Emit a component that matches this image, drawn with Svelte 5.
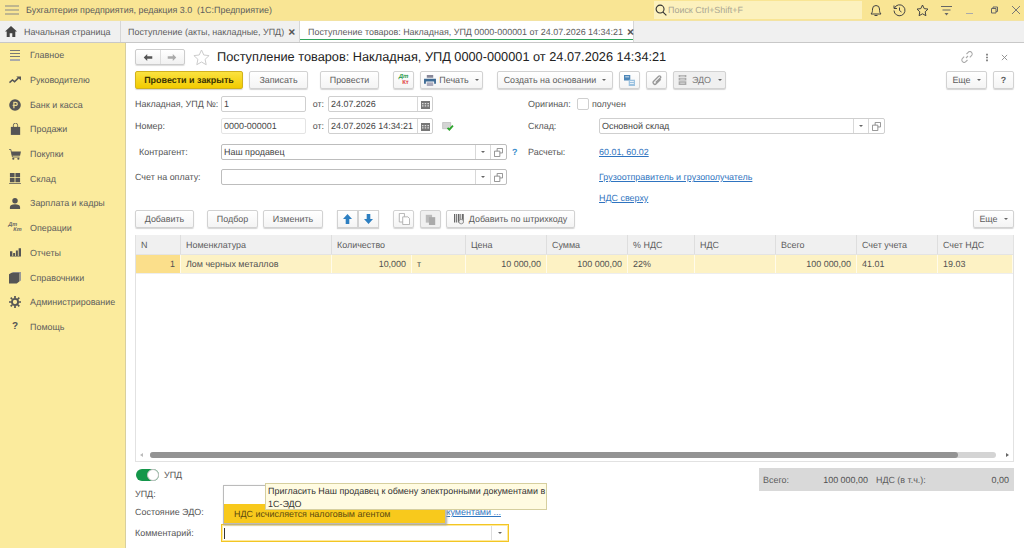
<script>
	const menu = [
		{ name: 'Главное', icon: 'main' },
		{ name: 'Руководителю', icon: 'trend' },
		{ name: 'Банк и касса', icon: 'bank' },
		{ name: 'Продажи', icon: 'bag' },
		{ name: 'Покупки', icon: 'cart' },
		{ name: 'Склад', icon: 'grid' },
		{ name: 'Зарплата и кадры', icon: 'person' },
		{ name: 'Операции', icon: 'dtkt' },
		{ name: 'Отчеты', icon: 'bars' },
		{ name: 'Справочники', icon: 'books' },
		{ name: 'Администрирование', icon: 'gear' },
		{ name: 'Помощь', icon: 'help' }
	];

	const head = [
		['N', 'c-n'], ['Номенклатура', 'c-name'], ['Количество', 'c-qty'], ['Цена', 'c-price'],
		['Сумма', 'c-sum'], ['% НДС', 'c-pct'], ['НДС', 'c-vat'], ['Всего', 'c-total'],
		['Счет учета', 'c-acc'], ['Счет НДС', 'c-vacc']
	];

	const row = [
		['1', 'num c-line'], ['Лом черных металлов', ''], ['10,000', 'num'], ['т', ''], ['10 000,00', 'num'],
		['100 000,00', 'num'], ['22%', ''], ['', ''], ['100 000,00', 'num'], ['41.01', ''], ['19.03', '']
	];
</script>

{#snippet calendar()}
	<span class="side-btn">
		<svg width="9" height="9" viewBox="0 0 9 9"><path fill="#777" d="M0 1h9v8H0z"/><path fill="#ddd" d="M1 3h1.500v1.300H1zM3.700 3h1.500v1.300H3.700zM6.400 3H8v1.300H6.400zM1 5.300h1.500v1.300H1zM3.700 5.300h1.500v1.300H3.700zM6.400 5.300H8v1.300H6.400z"/></svg>
	</span>
{/snippet}

{#snippet combo()}
	<span class="side-btn"><i class="caret"></i></span>
	<span class="side-btn wide">
		<svg width="9" height="9" viewBox="0 0 10 10" fill="none" stroke="#888"><path d="M3.500 3.500v-3h6v5h-3"/><path d="M.5 3.500h6v6h-6z"/></svg>
	</span>
{/snippet}

<div class="app">
	<header class="topbar">
		<svg class="burger" width="14" height="10" viewBox="0 0 14 10"><path stroke="#888" stroke-width="1.100" d="M0 1h14M0 5h14M0 9h14"/></svg>
		<span class="app-title">Бухгалтерия предприятия, редакция 3.0&nbsp; (1С:Предприятие)</span>
		<div class="search">
			<svg width="12" height="12" viewBox="0 0 13 13" fill="none" stroke="#333" stroke-width="1.200"><circle cx="5.500" cy="5.500" r="4.300"/><path d="M8.700 8.700l3.600 3.600"/></svg>
			<span>Поиск Ctrl+Shift+F</span>
		</div>
		<div class="sys">
			<svg width="12" height="13" viewBox="0 0 12 13" fill="none" stroke="#444"><path d="M1 10c1.500-1.500 1.500-3 1.500-5a3.500 3.500 0 0 1 7 0c0 2 0 3.500 1.500 5z"/><path d="M4.500 11.500h3"/></svg>
			<svg width="13" height="13" viewBox="0 0 13 13" fill="none" stroke="#444"><path d="M1.500 4a5.500 5.500 0 1 1-.5 2.500"/><path d="M1 1.500V4.500h3"/><path d="M6.500 3.500v3l2 1.500"/></svg>
			<svg width="13" height="13" viewBox="0 0 13 13" fill="none" stroke="#444"><path d="M6.500 1l1.700 3.600 3.800.5-2.800 2.700.7 3.900-3.400-1.900-3.400 1.900.7-3.900L1 5.100l3.800-.5z"/></svg>
			<svg width="13" height="11" viewBox="0 0 13 11"><path stroke="#666" d="M1 1.500h11M2.500 5h8"/><path fill="#666" d="M4.500 8h4l-2 2.500z"/></svg>
			<svg width="13" height="11" viewBox="0 0 13 11"><path stroke="#aaa" d="M3 8.500h7"/></svg>
			<svg width="13" height="11" viewBox="0 0 13 11" fill="none" stroke="#666"><path d="M4.500 3.500h4.500v4.500H4.500z"/><path d="M6 3.500V2h4.500v4.500H9"/></svg>
			<svg width="13" height="11" viewBox="0 0 13 11"><path stroke="#777" d="M2 1l8 8M10 1l-8 8"/></svg>
		</div>
	</header>

	<nav class="tabs">
		<div class="tab home">
			<svg width="12" height="11" viewBox="0 0 12 11"><path fill="#444" d="M6 0l6 5.500h-1.700V11H7.300V7.300H4.700V11H1.700V5.500H0z"/></svg>
			<span>Начальная страница</span>
		</div>
		<div class="tab list">
			<span>Поступление (акты, накладные, УПД)</span><b class="x">×</b>
		</div>
		<div class="tab active">
			<span>Поступление товаров: Накладная, УПД 0000-000001 от 24.07.2026 14:34:21</span><b class="x">×</b>
		</div>
	</nav>

	<div class="body">
		<aside class="sidebar">
			{#each menu as item}
				<div class="menu-item">
					<span class="menu-icon">
						{#if item.icon === 'main'}
							<svg width="14" height="13" viewBox="0 0 14 13"><path stroke="#777" d="M2 1.500h10M2 4.500h10M2 7.500h10"/><path stroke="#aaa" stroke-width="2" d="M2 11h10"/></svg>
						{:else if item.icon === 'trend'}
							<svg width="12" height="8" viewBox="0 0 14 9" fill="none"><path stroke="#555" stroke-width="1.800" d="M.5 7.500l3.500-3 2.500 2L11 2"/><path fill="#555" d="M8.500.500H14V5z"/></svg>
						{:else if item.icon === 'bank'}
							<svg width="12" height="12" viewBox="0 0 13 13"><circle cx="6.500" cy="6.500" r="6.300" fill="#555"/><path fill="none" stroke="#e9d78c" stroke-width="1.400" d="M5.300 10V3.700h2a1.600 1.600 0 0 1 0 3.300H4"/></svg>
						{:else if item.icon === 'bag'}
							<svg width="11" height="12" viewBox="0 0 13 14"><path fill="#555" d="M1 4.500h11V14H1z"/><path fill="none" stroke="#555" d="M4 6V2.500a2.500 2.500 0 0 1 5 0V6"/></svg>
						{:else if item.icon === 'cart'}
							<svg width="12" height="11" viewBox="0 0 14 13"><path fill="#555" d="M2.500 3H14l-1 5H3.500z"/><path stroke="#555" fill="none" d="M0 .5h2l2 9h8.500"/><circle cx="5" cy="11.500" r="1.300" fill="#555"/><circle cx="11" cy="11.500" r="1.300" fill="#555"/></svg>
						{:else if item.icon === 'grid'}
							<svg width="12" height="11" viewBox="0 0 14 13"><path fill="#555" d="M1 0h5.500v5H1zM7.500 0H13v5H7.500zM1 6h5.500v5H1zM7.500 6H13v5H7.500zM0 12h14v1H0z"/></svg>
						{:else if item.icon === 'person'}
							<svg width="12" height="11" viewBox="0 0 14 13"><circle cx="7" cy="3.300" r="3.200" fill="#555"/><path fill="#555" d="M1 13v-2.500C1 8.500 3.500 7.300 7 7.300s6 1.200 6 3.200V13z"/></svg>
						{:else if item.icon === 'dtkt'}
							<span class="dtkt"><em>Дт</em><em>Кт</em></span>
						{:else if item.icon === 'bars'}
							<svg width="11" height="9" viewBox="0 0 14 11"><path fill="#555" d="M0 4h3v6H0zM4 6h2.500v4H4zM7.500 3H10v7H7.500zM11 0h3v10h-3zM0 10.300h14v.7H0z"/></svg>
						{:else if item.icon === 'books'}
							<svg width="12" height="12" viewBox="0 0 14 14"><path fill="#999" d="M4 0h10v10l-2 1V2H4z"/><path fill="#555" d="M0 2.500L3 1h9v10l-3 2.500H0z"/></svg>
						{:else if item.icon === 'gear'}
							<svg width="12" height="12" viewBox="0 0 14 14"><circle cx="7" cy="7" r="3.600" fill="none" stroke="#555" stroke-width="2.200"/><path stroke="#555" stroke-width="2" d="M7 0v2.500M7 11.500V14M0 7h2.500M11.500 7H14M2 2l1.800 1.800M10.200 10.200L12 12M12 2l-1.800 1.800M3.800 10.200L2 12"/></svg>
						{:else}
							<b class="qmark">?</b>
						{/if}
					</span>
					<span>{item.name}</span>
				</div>
			{/each}
		</aside>

		<main class="form-page">
			<div class="title-row">
				<div class="nav-group">
					<button type="button"><svg width="10" height="7" viewBox="0 0 11 9"><path fill="#555" d="M0 4.500L4.500 0v3H11v3H4.500v3z"/></svg></button>
					<button type="button"><svg width="10" height="7" viewBox="0 0 11 9"><path fill="#aaa" d="M11 4.500L6.500 0v3H0v3h6.500v3z"/></svg></button>
				</div>
				<svg class="star" width="17" height="17" viewBox="0 0 17 17" fill="#fff" stroke="#ccc"><path d="M8.500 1l2.300 5 5.300.6-4 3.700 1.100 5.400-4.700-2.700-4.700 2.700 1.100-5.400-4-3.700 5.300-.6z"/></svg>
				<h1>Поступление товаров: Накладная, УПД 0000-000001 от 24.07.2026 14:34:21</h1>
				<div class="title-tools">
					<svg width="12" height="12" viewBox="0 0 12 12" fill="none" stroke="#aaa" stroke-width="1.100"><path d="M5 7l2-2"/><path d="M5.500 3l1.700-1.700a2.200 2.200 0 0 1 3.300 3.300L8.800 6.300"/><path d="M6.500 9l-1.700 1.700a2.200 2.200 0 0 1-3.300-3.300L3.200 5.700"/></svg>
					<svg width="2" height="9" viewBox="0 0 3 11"><path fill="#888" d="M0 0h3v2.500H0zM0 4.200h3v2.500H0zM0 8.500h3V11H0z"/></svg>
					<svg width="7" height="7" viewBox="0 0 8 8"><path stroke="#888" d="M1 1l6 6M7 1L1 7"/></svg>
				</div>
			</div>

			<div class="toolbar main-bar">
				<button class="btn primary" type="button">Провести и закрыть</button>
				<button class="btn save" type="button">Записать</button>
				<button class="btn post" type="button">Провести</button>
				<button class="btn icon dk" type="button"><span class="dk-mark"><em>Дт</em><em>Кт</em></span></button>
				<button class="btn print" type="button">
					<svg width="12" height="11" viewBox="0 0 13 12"><path fill="#3d6a94" d="M0 4h13v5.500h-2V7H2v2.500H0z"/><path fill="#889" d="M3 0h7v3H3z"/><path fill="#aab" d="M3 8h7v4H3z"/></svg>
					Печать<i class="caret"></i>
				</button>
				<button class="btn based" type="button">Создать на основании<i class="caret"></i></button>
				<button class="btn icon" type="button">
					<svg width="11" height="11" viewBox="0 0 14 14"><path fill="#4c86b8" d="M0 0h8v7H0z"/><path fill="#9cc2e0" d="M6 6h8v8H6z"/><path fill="#fff" d="M1.500 2h5v1h-5zM7.500 8h5v1h-5zM7.500 10.500h5v1h-5z"/></svg>
				</button>
				<button class="btn icon" type="button">
					<svg width="10" height="11" viewBox="0 0 12 13" fill="none" stroke="#999" stroke-width="1.600"><path d="M10.500 5L5 10.500a2 2 0 0 1-3-3l6-6a1.300 1.300 0 0 1 2 2l-5.500 5.500"/></svg>
				</button>
				<button class="btn edo muted" type="button">
					<svg width="11" height="10" viewBox="0 0 14 13"><path fill="#aaa" d="M2 0h10v3H2zM2 4h10v3H2zM2 8h10v5H2z"/><path fill="#eee" d="M4 1h6v1H4zM4 5h6v1H4zM4 10h6v1H4z"/></svg>
					ЭДО<i class="caret"></i>
				</button>
				<span class="spacer"></span>
				<button class="btn more" type="button">Еще<i class="caret"></i></button>
				<button class="btn icon help" type="button">?</button>
			</div>

			<div class="form">
				<div class="cell">
					<label class="lbl" for="doc-no">Накладная, УПД №:</label>
					<span class="input short" id="doc-no">1</span>
					<span class="from">от:</span>
					<span class="input date"><span class="val">24.07.2026</span>{@render calendar()}</span>
				</div>
				<div class="cell">
					<span class="lbl side short-lbl">Оригинал:</span>
					<span class="check"></span>
					<span class="lbl-text">получен</span>
				</div>

				<div class="cell">
					<span class="lbl">Номер:</span>
					<span class="input short soft">0000-000001</span>
					<span class="from">от:</span>
					<span class="input date"><span class="val">24.07.2026 14:34:21</span>{@render calendar()}</span>
					<svg class="posted" width="12" height="9" viewBox="0 0 13 10"><path fill="#d4d4d4" stroke="#aaa" stroke-width=".6" d="M.5.500h9v7h-9z"/><path fill="none" stroke="#2aa52a" stroke-width="2" d="M6 6.500l2 2 4-4.500"/></svg>
				</div>
				<div class="cell">
					<span class="lbl side">Склад:</span>
					<span class="input wide-input"><span class="val">Основной склад</span>{@render combo()}</span>
				</div>

				<div class="cell">
					<span class="lbl indent">Контрагент:</span>
					<span class="input wide-input dark"><span class="val">Наш продавец</span>{@render combo()}</span>
					<span class="hint">?</span>
				</div>
				<div class="cell">
					<span class="lbl side">Расчеты:</span>
					<a class="link" href="#accounts">60.01, 60.02</a>
				</div>

				<div class="cell">
					<span class="lbl">Счет на оплату:</span>
					<span class="input wide-input dark"><span class="val"></span>{@render combo()}</span>
				</div>
				<div class="cell">
					<span class="lbl side"></span>
					<a class="link" href="#shipper">Грузоотправитель и грузополучатель</a>
				</div>

				<div class="cell"></div>
				<div class="cell">
					<span class="lbl side"></span>
					<a class="link" href="#vat">НДС сверху</a>
				</div>
			</div>

			<div class="toolbar table-bar">
				<button class="btn add" type="button">Добавить</button>
				<button class="btn pick" type="button">Подбор</button>
				<button class="btn edit" type="button">Изменить</button>
				<div class="updown">
					<button class="btn icon" type="button"><svg width="9" height="10" viewBox="0 0 10 11"><path fill="#2d7fc1" d="M5 0l5 5.500H7V11H3V5.500H0z"/></svg></button>
					<button class="btn icon" type="button"><svg width="9" height="10" viewBox="0 0 10 11"><path fill="#2d7fc1" d="M5 11L0 5.500h3V0h4v5.500h3z"/></svg></button>
				</div>
				<button class="btn icon copy" type="button">
					<svg width="12" height="12" viewBox="0 0 14 14" fill="#fff" stroke="#aaa"><path d="M1.500.500h6v10h-6z"/><path d="M5.500 4.500h6l2 2v7h-8z"/></svg>
				</button>
				<button class="btn icon muted" type="button">
					<svg width="11" height="11" viewBox="0 0 14 14"><path fill="#bbb" d="M1 1h8v10H1z"/><path fill="#aaa" d="M5 4h8v10H5z"/></svg>
				</button>
				<button class="btn barcode" type="button">
					<svg width="11" height="11" viewBox="0 0 13 13"><path fill="#666" d="M0 0h1.500v10H0zM2.500 0h1v10h-1zM4.500 0h2v10h-2zM7.500 0h1v10h-1zM9.500 0h2v10h-2z"/><circle cx="8.500" cy="9" r="2.700" fill="#eee" stroke="#888"/></svg>
					Добавить по штрихкоду
				</button>
				<span class="spacer"></span>
				<button class="btn more" type="button">Еще<i class="caret"></i></button>
			</div>

			<div class="table">
				<div class="thead">
					{#each head as [text, cls]}
						<div class={'th ' + cls}>{text}</div>
					{/each}
				</div>
				<div class="tbody">
					{#each row as [text, cls]}
						<div class={'td ' + cls}>{text}</div>
					{/each}
				</div>
				<div class="hscroll">
					<i class="arrow left"></i>
					<div class="track"><div class="thumb"></div></div>
					<i class="arrow right"></i>
				</div>
			</div>

			<div class="footer">
				<div class="foot-left">
					<div class="toggle-row">
						<span class="toggle"><i></i></span>
						<span class="lbl-text">УПД</span>
					</div>
					<div class="foot-row"><span class="lbl">УПД:</span></div>
					<div class="foot-row">
						<span class="lbl">Состояние ЭДО:</span>
						<a class="link edo-link" href="#invite">к обмену документами ...</a>
					</div>
					<div class="foot-row comment">
						<span class="lbl">Комментарий:</span>
						<span class="comment-input"><i class="cursor"></i><span class="comment-btn"><i class="caret"></i></span></span>
					</div>
				</div>
				<div class="totals">
					<span>Всего:</span>
					<span class="total-val first">100 000,00</span>
					<span>НДС (в т.ч.):</span>
					<span class="total-val second">0,00</span>
				</div>
			</div>

			<div class="dropdown">
				<div class="dd-empty"></div>
				<div class="dd-item">НДС исчисляется налоговым агентом</div>
			</div>
			<div class="tooltip">Пригласить Наш продавец к обмену электронными документами в 1С-ЭДО</div>
		</main>
	</div>
</div>

<style>
	:global(body) {
		margin: 0;
		overflow: hidden;
		background: #fff;
	}

	.app {
		width: 1024px;
		height: 548px;
		display: flex;
		flex-direction: column;
		overflow: hidden;
		font-family: 'Liberation Sans', Arial, sans-serif;
		font-size: 8.950px;
		text-rendering: geometricPrecision;
		color: #555;
	}

	/* top bar */
	.topbar {
		height: 20px;
		flex: none;
		display: flex;
		align-items: center;
		background: #f9e594;
		border-bottom: 1px solid #f3e3a3;
	}

	.burger {
		margin-left: 5px;
	}

	.app-title {
		margin-left: 7px;
		color: #5c5c5c;
	}

	.search {
		position: absolute;
		left: 654px;
		top: 1px;
		width: 208px;
		height: 18px;
		display: flex;
		align-items: center;
		gap: 1px;
		background: #fcf1bd;
		color: #a9a592;
		box-sizing: border-box;
		padding-left: 1px;
	}

	.sys {
		position: absolute;
		left: 870px;
		top: 4px;
		width: 154px;
		display: flex;
		gap: 10.500px;
		align-items: center;
	}

	/* tabs */
	.tabs {
		height: 21px;
		flex: none;
		display: flex;
		background: #f0f0f0;
		border-bottom: 1px solid #c8c8c8;
	}

	.tab {
		display: flex;
		align-items: center;
		box-sizing: border-box;
		color: #5c5c5c;
		border-right: 1px solid #d6d6d6;
		white-space: nowrap;
	}

	.tab.home {
		width: 121px;
		padding-left: 5px;
		gap: 7px;
	}

	.tab.list {
		width: 179px;
		padding-left: 7px;
		gap: 4px;
	}

	.tab.active {
		width: 334px;
		padding-left: 8px;
		gap: 4px;
		background: #fff;
		box-shadow: inset 0 -2px #fff, inset 0 -3px #2ea55b;
	}

	.x {
		font-size: 12px;
		color: #555;
		line-height: 1;
	}

	.body {
		flex: 1;
		min-height: 0;
		display: flex;
	}

	/* sidebar */
	.sidebar {
		width: 126px;
		flex: none;
		box-sizing: border-box;
		background: #fbeb9d;
		border-right: 1px solid #d8cf9e;
	}

	.menu-item {
		height: 24.700px;
		display: flex;
		align-items: center;
		color: #5c5c5c;
	}

	.menu-icon {
		width: 30px;
		display: flex;
		justify-content: center;
	}

	.dtkt {
		display: flex;
		flex-direction: column;
		font-size: 5.500px;
		font-weight: bold;
		line-height: 5.500px;
		color: #666;
	}

	.dtkt em {
		font-style: italic;
	}

	.dtkt em:last-child {
		margin-left: 5px;
	}

	.qmark {
		font-size: 10px;
		color: #555;
	}

	/* form */
	.form-page {
		flex: 1;
		min-width: 0;
		padding: 5px 10px 0 9px;
	}

	.title-row {
		height: 18px;
		display: flex;
		align-items: center;
	}

	.nav-group {
		display: flex;
		width: 50px;
		height: 16px;
		box-sizing: border-box;
		border: 1px solid #ccc;
		border-radius: 2px;
		background: linear-gradient(#fff, #f1f1f1);
		box-shadow: 0 1px 1px #ddd;
	}

	.nav-group button {
		flex: 1;
		padding: 0;
		border: 0;
		background: none;
		display: flex;
		align-items: center;
		justify-content: center;
	}

	.nav-group button + button {
		border-left: 1px solid #ddd;
	}

	.star {
		margin-left: 8px;
	}

	h1 {
		margin: 0 0 0 7px;
		font-size: 12.750px;
		font-weight: normal;
		color: #222;
		white-space: nowrap;
		line-height: 18px;
	}

	.title-tools {
		margin-left: auto;
		display: flex;
		align-items: center;
		gap: 13px;
		padding-right: 6px;
	}

	.toolbar {
		display: flex;
		align-items: center;
	}

	.main-bar {
		height: 18px;
		margin-top: 5px;
	}

	.table-bar {
		height: 18px;
	}

	.btn {
		height: 18px;
		padding: 0;
		box-sizing: border-box;
		display: inline-flex;
		align-items: center;
		justify-content: center;
		flex: none;
		gap: 3px;
		font: inherit;
		text-rendering: inherit;
		color: #5c5c5c;
		border: 1px solid #d2d2d2;
		border-radius: 2px;
		background: linear-gradient(#fff, #f4f4f4);
		box-shadow: 0 1px 1px #d5d5d5;
	}

	.btn.primary {
		width: 108px;
		font-weight: bold;
		color: #3a3200;
		background: linear-gradient(#fbe240, #f2cb00);
		border-color: #d2b21c;
	}

	.btn.save { width: 59px; margin-left: 6px; }
	.btn.post { width: 59px; margin-left: 12px; }
	.btn.icon { width: 21px; }
	.btn.dk { margin-left: 14px; }
	.btn.print { width: 63px; margin-left: 6px; }
	.btn.based { width: 116px; margin-left: 14px; }
	.btn.based + .btn { margin-left: 6px; }
	.btn.based + .btn + .btn { margin-left: 6px; }
	.btn.edo { width: 53px; margin-left: 6px; gap: 4px; }
	.btn.more { width: 41px; }
	.btn.help { margin-left: 6px; font-weight: bold; }
	.btn.muted { background: #f0f0f0; color: #777; }

	.btn.add { width: 59px; }
	.btn.pick { width: 51px; margin-left: 13px; }
	.btn.edit { width: 60px; margin-left: 5px; }
	.updown { display: flex; margin-left: 14px; }
	.updown .btn { border-radius: 0; }
	.btn.copy { margin-left: 14px; }
	.btn.copy + .btn { margin-left: 6px; }
	.btn.barcode { width: 129px; margin-left: 5px; gap: 4px; }

	.spacer {
		flex: 1;
	}

	.caret {
		display: inline-block;
		width: 0;
		height: 0;
		margin-left: 3px;
		border: 2px solid transparent;
		border-top: 2.500px solid #666;
		border-bottom: 0;
	}

	.dk-mark {
		display: flex;
		flex-direction: column;
		font-size: 6px;
		font-weight: bold;
		line-height: 6px;
	}

	.dk-mark em:first-child { color: #2a9a4a; }
	.dk-mark em:last-child { color: #e04040; margin-left: 4px; font-style: normal; }

	.form {
		display: grid;
		grid-template-columns: 393px 1fr;
		grid-template-rows: 22px 26px 25px 21px 20px;
		margin-top: 7px;
	}

	.cell {
		display: flex;
		align-items: center;
		height: 16px;
		white-space: nowrap;
	}

	.lbl {
		width: 86px;
		flex: none;
	}

	.lbl.indent {
		padding-left: 4px;
		box-sizing: border-box;
	}

	.lbl.side {
		width: 71px;
	}

	.lbl.short-lbl {
		width: 49px;
	}

	.input {
		height: 16px;
		box-sizing: border-box;
		display: flex;
		align-items: center;
		flex: none;
		border: 1px solid #cfcfcf;
		border-radius: 2px;
		padding-left: 2px;
		color: #444;
		background: #fff;
	}

	.input.dark {
		border-color: #bdbdbd;
	}

	.input.soft {
		border-color: #e4e4e4;
	}

	.input.short {
		width: 85px;
	}

	.input.date {
		width: 105px;
	}

	.input.wide-input {
		width: 286px;
	}

	.val {
		flex: 1;
		min-width: 0;
	}

	.from {
		width: 22px;
		padding-right: 4px;
		box-sizing: border-box;
		text-align: right;
		flex: none;
	}

	.side-btn {
		width: 14px;
		height: 14px;
		flex: none;
		display: flex;
		align-items: center;
		justify-content: center;
		border-left: 1px solid #d8d8d8;
	}

	.side-btn.wide {
		width: 15px;
	}

	.side-btn .caret {
		margin-left: 0;
	}

	.posted {
		margin-left: 9px;
	}

	.hint {
		margin-left: 5px;
		color: #3a8ccb;
		font-weight: bold;
	}

	.check {
		width: 10px;
		height: 10px;
		border: 1px solid #cfcfcf;
		border-radius: 2px;
		margin-right: 3px;
		background: #fff;
	}

	.link {
		color: #2f74c0;
		text-decoration: underline;
	}

	/* table */
	.table {
		margin-top: 7px;
		height: 227px;
		box-sizing: border-box;
		display: flex;
		flex-direction: column;
		border: 1px solid #e2e2e2;
		border-top: 0;
	}

	.thead,
	.tbody {
		display: grid;
		grid-template-columns: 45px 151px 80px 54px 81px 81px 67px 81px 81px 81px 1fr;
	}

	.thead {
		height: 20px;
		background: #f0f0f0;
		border-bottom: 1px solid #e4e4e4;
		box-sizing: border-box;
	}

	.th {
		display: flex;
		align-items: center;
		padding-left: 5px;
		border-right: 1px solid #dedede;
		color: #5c5c5c;
	}

	.th.c-qty {
		grid-column: span 2;
	}

	.th.c-vacc {
		border-right: 0;
	}

	.tbody {
		height: 19px;
		background: #fdf2c4;
		border-bottom: 1px solid #eee;
		box-sizing: border-box;
	}

	.td {
		display: flex;
		align-items: center;
		padding: 0 5px;
		border-right: 1px solid #fffbea;
		color: #505050;
	}

	.td.num {
		justify-content: flex-end;
	}

	.td.c-line {
		background: #fbdf8b;
	}

	.hscroll {
		margin-top: auto;
		height: 7px;
		margin-bottom: 3px;
		display: flex;
		align-items: center;
		padding: 0 4px;
		gap: 5px;
	}

	.arrow {
		width: 0;
		height: 0;
		border: 2px solid transparent;
	}

	.arrow.left {
		border-right: 3px solid #bbb;
		border-left: 0;
		margin-right: 2px;
	}

	.arrow.right {
		border-left: 3px solid #666;
		border-right: 0;
		margin-left: 5px;
	}

	.track {
		flex: 1;
		height: 6px;
		border-radius: 3px;
		background: #d4d4d4;
	}

	.thumb {
		width: 808px;
		height: 6px;
		border-radius: 3px;
		background: #939393;
	}

	/* footer */
	.footer {
		display: flex;
		justify-content: space-between;
	}

	.foot-left {
		width: 400px;
	}

	.toggle-row {
		display: flex;
		align-items: center;
		height: 12px;
		margin-top: 7px;
		gap: 5px;
		padding-left: 1px;
	}

	.toggle {
		width: 23px;
		height: 12px;
		box-sizing: border-box;
		display: block;
		position: relative;
		border-radius: 6px;
		background: #14964a;
	}

	.toggle i {
		position: absolute;
		right: 0;
		top: 0;
		width: 12px;
		height: 12px;
		box-sizing: border-box;
		border-radius: 50%;
		background: #fff;
		border: 1px solid #c0c0c0;
	}

	.foot-row {
		height: 18px;
		display: flex;
		align-items: center;
		white-space: nowrap;
	}

	.foot-row:nth-child(2) {
		margin-top: 4px;
	}

	.foot-row .edo-link {
		margin-left: 176px;
	}

	.foot-row.comment {
		margin-top: 3px;
	}

	.comment-input {
		width: 288px;
		height: 18px;
		box-sizing: border-box;
		display: flex;
		align-items: center;
		justify-content: space-between;
		border: 1px solid #f3c623;
		box-shadow: inset 0 0 0 1px #fde9a0;
		background: #fff;
		padding-left: 2px;
	}

	.cursor {
		width: 1px;
		height: 11px;
		background: #333;
	}

	.comment-btn {
		width: 15px;
		height: 14px;
		display: flex;
		align-items: center;
		justify-content: center;
		border-left: 1px solid #ddd;
		margin-right: 1px;
	}

	.comment-btn .caret {
		margin-left: 0;
	}

	.totals {
		width: 255px;
		height: 23px;
		margin-top: 6px;
		box-sizing: border-box;
		display: flex;
		align-items: center;
		padding: 0 5px 0 4px;
		background: #d9d9d9;
		white-space: nowrap;
		color: #5c5c5c;
	}

	.total-val {
		text-align: right;
		color: #505050;
		flex: none;
	}

	.total-val.first {
		width: 79px;
		margin-right: 8px;
	}

	.total-val.second {
		flex: 1;
	}

	/* popups */
	.dropdown {
		position: absolute;
		left: 223px;
		top: 485px;
		width: 223px;
		height: 39px;
		box-sizing: border-box;
		background: #fff;
		border: 1px solid #bbb;
		box-shadow: 1px 1px 2px #aaa;
		z-index: 2;
	}

	.dd-empty {
		height: 18px;
	}

	.dd-item {
		height: 19px;
		display: flex;
		align-items: center;
		padding-left: 10px;
		background: #f8c91c;
		color: #5a4a10;
	}

	.tooltip {
		position: absolute;
		left: 265px;
		top: 483px;
		width: 282px;
		height: 27px;
		box-sizing: border-box;
		padding: 1px 0 1px 2px;
		background: #fffbe1;
		border: 1px solid #d6cf9f;
		color: #333;
		line-height: 13px;
		z-index: 3;
	}
</style>
